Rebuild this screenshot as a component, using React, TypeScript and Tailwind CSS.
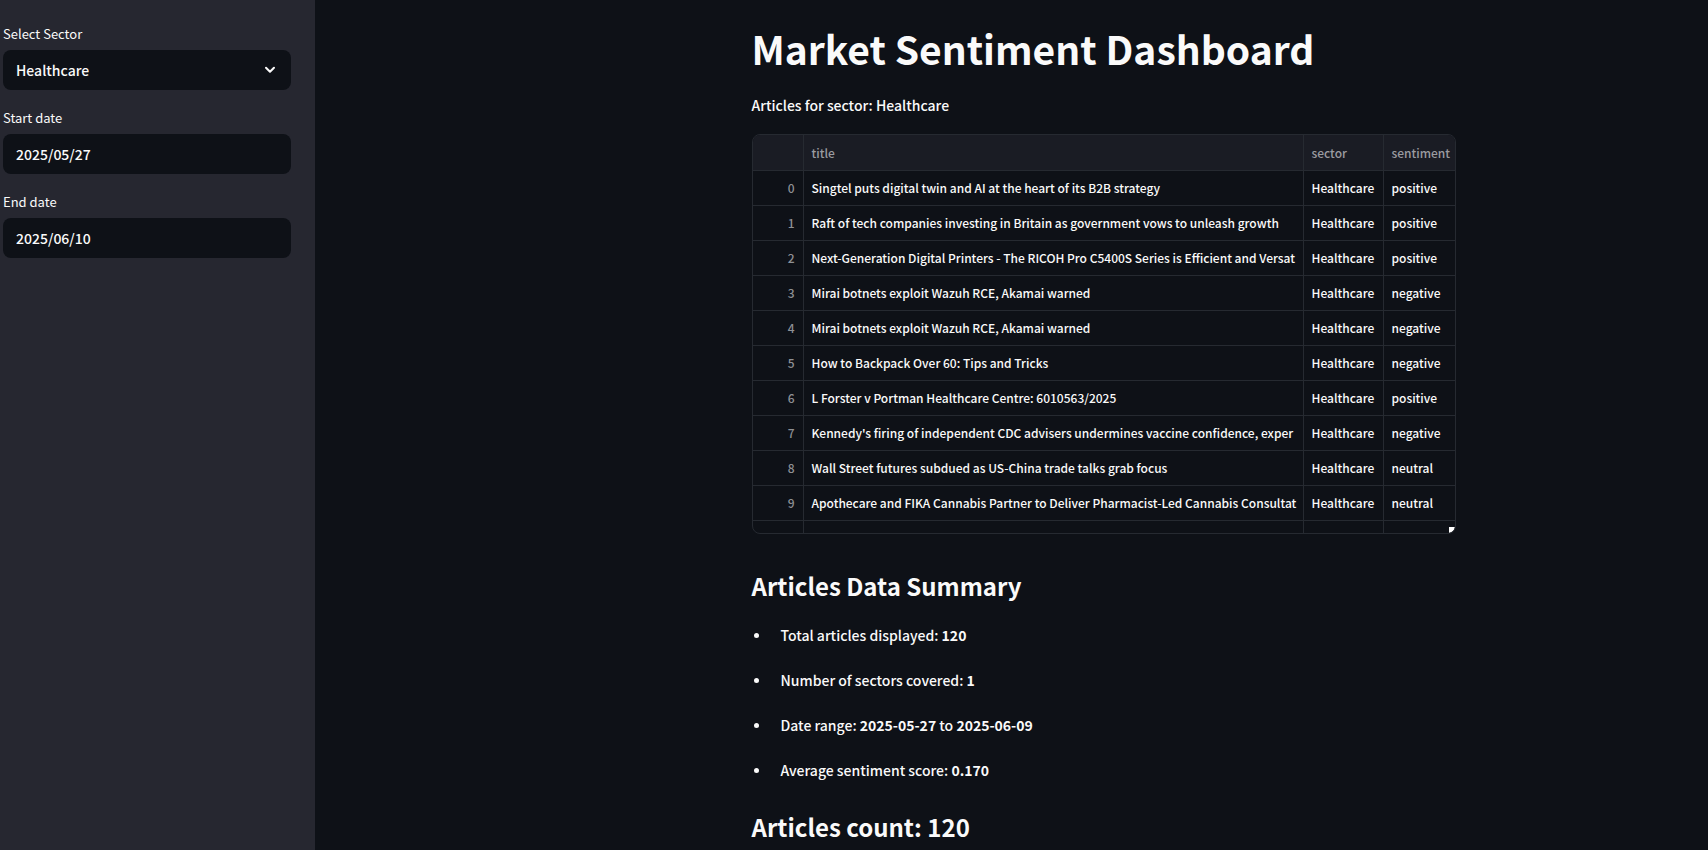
import { useId, useState } from "react";

type Article = { title: string; sector: string; sentiment: string };

const articles: Article[] = [
  { title: "Singtel puts digital twin and AI at the heart of its B2B strategy", sector: "Healthcare", sentiment: "positive" },
  { title: "Raft of tech companies investing in Britain as government vows to unleash growth", sector: "Healthcare", sentiment: "positive" },
  { title: "Next-Generation Digital Printers - The RICOH Pro C5400S Series is Efficient and Versat", sector: "Healthcare", sentiment: "positive" },
  { title: "Mirai botnets exploit Wazuh RCE, Akamai warned", sector: "Healthcare", sentiment: "negative" },
  { title: "Mirai botnets exploit Wazuh RCE, Akamai warned", sector: "Healthcare", sentiment: "negative" },
  { title: "How to Backpack Over 60: Tips and Tricks", sector: "Healthcare", sentiment: "negative" },
  { title: "L Forster v Portman Healthcare Centre: 6010563/2025", sector: "Healthcare", sentiment: "positive" },
  { title: "Kennedy's firing of independent CDC advisers undermines vaccine confidence, exper", sector: "Healthcare", sentiment: "negative" },
  { title: "Wall Street futures subdued as US-China trade talks grab focus", sector: "Healthcare", sentiment: "neutral" },
  { title: "Apothecare and FIKA Cannabis Partner to Deliver Pharmacist-Led Cannabis Consultat", sector: "Healthcare", sentiment: "neutral" },
];

const labelClass = "mb-1 flex h-6 items-center text-[13px]";
const fieldClass =
  "h-10 w-full appearance-none rounded-lg bg-[#0e1117] px-[13px] text-[14px] font-medium text-[#fafafa] outline-none";

function DateField({ label, initial }: { label: string; initial: string }) {
  const id = useId();
  const [value, setValue] = useState(initial);
  return (
    <div>
      <label htmlFor={id} className={labelClass}>{label}</label>
      <input id={id} type="text" className={fieldClass} value={value} onChange={(e) => setValue(e.target.value)} />
    </div>
  );
}

function SectorSelect() {
  const id = useId();
  return (
    <div>
      <label htmlFor={id} className={labelClass}>Select Sector</label>
      <div className="relative">
        <select id={id} className={fieldClass} defaultValue="Healthcare">
          <option>Healthcare</option>
        </select>
        <svg viewBox="0 0 12 8" className="pointer-events-none absolute top-4 right-[15px] h-2 w-3" fill="none" stroke="#fafafa" strokeWidth="2" strokeLinecap="round" strokeLinejoin="round" aria-hidden="true">
          <path d="M2 1.7 6 5.8 10 1.7" />
        </svg>
      </div>
    </div>
  );
}

function ArticlesTable() {
  const cell = "overflow-hidden border-b border-r border-[#262a31] px-2 whitespace-nowrap last:border-r-0";
  return (
    <div className="relative mt-[17px] h-[400px] overflow-hidden rounded-lg border border-[#262a31]">
      <table className="w-full table-fixed border-separate border-spacing-0 text-left text-[12px] leading-5 font-medium">
        <colgroup>
          <col className="w-[51px]" />
          <col />
          <col className="w-20" />
          <col className="w-[71px]" />
        </colgroup>
        <thead>
          <tr className="h-9 bg-[#1a1c24] text-[#9a9ba0]">
            <th className={cell} aria-label="index" />
            <th className={cell + " font-medium"}>title</th>
            <th className={cell + " font-medium"}>sector</th>
            <th className={cell + " font-medium"}>sentiment</th>
          </tr>
        </thead>
        <tbody>
          {articles.map((a, i) => (
            <tr key={i} className="h-[35px]">
              <td className={cell + " text-right text-[#8e9095]"}>{i}</td>
              <td className={cell}>{a.title}</td>
              <td className={cell}>{a.sector}</td>
              <td className={cell}>{a.sentiment}</td>
            </tr>
          ))}
          <tr className="h-[35px]">
            <td className={cell} />
            <td className={cell} />
            <td className={cell} />
            <td className={cell} />
          </tr>
        </tbody>
      </table>
      <svg viewBox="0 0 6 6" className="absolute right-0 bottom-0 size-[6px]" aria-hidden="true">
        <path d="M0 0H6L5 3 3 5 0 6Z" fill="#fff" />
      </svg>
    </div>
  );
}

const itemClass =
  "flex items-center before:mr-[22px] before:ml-[2px] before:size-[5px] before:rounded-full before:bg-[#fafafa] before:content-['']";

export default function App() {
  return (
    <div className="flex h-screen overflow-hidden bg-[#0e1117] font-['Noto_Sans_CJK_SC',sans-serif] text-[#fafafa]">
      <aside className="flex w-[315px] shrink-0 flex-col gap-4 bg-[#262730] pt-[22px] pr-6 pl-[3px]">
        <SectorSelect />
        <DateField label="Start date" initial="2025/05/27" />
        <DateField label="End date" initial="2025/06/10" />
      </aside>
      <main className="flex min-w-0 flex-1 justify-center pl-[184px]">
        <div className="w-full max-w-[704px]">
          <h1 className="pt-[22px] text-[39px] leading-[52px] font-bold">Market Sentiment Dashboard</h1>
          <p className="mt-[19px] text-[14px] leading-6 font-medium">Articles for sector: Healthcare</p>
          <ArticlesTable />
          <h2 className="mt-[35px] text-[24px] leading-[34px] font-bold">Articles Data Summary</h2>
          <ul className="mt-5 flex flex-col gap-[21px] text-[14px] leading-6 font-medium">
            <li className={itemClass}><p>Total articles displayed: <strong>120</strong></p></li>
            <li className={itemClass}><p>Number of sectors covered: <strong>1</strong></p></li>
            <li className={itemClass}><p>Date range: <strong>2025-05-27</strong> to <strong>2025-06-09</strong></p></li>
            <li className={itemClass}><p>Average sentiment score: <strong>0.170</strong></p></li>
          </ul>
          <h2 className="mt-7 text-[24px] leading-[34px] font-bold">Articles count: 120</h2>
        </div>
      </main>
    </div>
  );
}
